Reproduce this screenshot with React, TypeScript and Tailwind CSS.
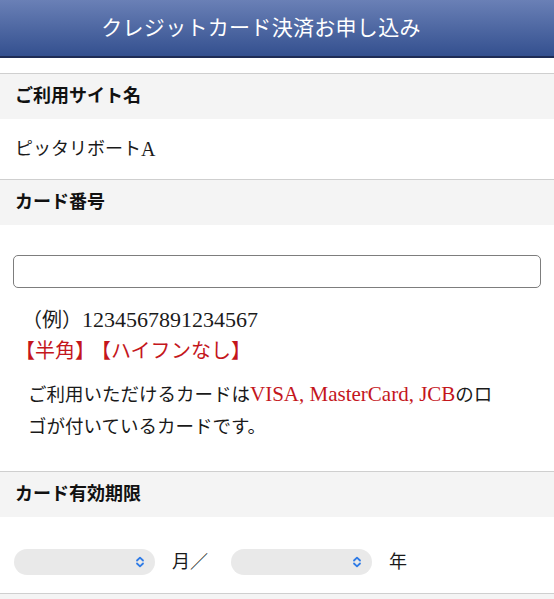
const serif = "font-['Liberation_Serif','Noto_Sans_CJK_JP',serif]"

function Chevrons() {
  return (
    <svg width="10" height="12" viewBox="0 0 10 12" fill="none" stroke="#2f7be6" strokeWidth="1.8" strokeLinecap="round" strokeLinejoin="round">
      <path d="M2 4.5 L5 1.6 L8 4.5" />
      <path d="M2 7.5 L5 10.4 L8 7.5" />
    </svg>
  )
}

function SectionHead({ label }: { label: string }) {
  return (
    <div className="border-t border-[#cfcfcf] bg-[#f4f4f4] h-[46px] flex items-center px-[15px]">
      <h2 className="text-[18px] font-bold text-[#111]">{label}</h2>
    </div>
  )
}

function SelectPill() {
  return (
    <div className="w-[141px] h-[26px] rounded-full bg-[#e9e9e9] flex items-center justify-end pr-[10px]">
      <Chevrons />
    </div>
  )
}

export default function App() {
  return (
    <div className={`${serif} bg-white min-h-[599px] text-[#1a1a1a]`}>
      {/* Title bar */}
      <header className="h-[58px] bg-gradient-to-b from-[#6a80b6] to-[#34508f] border-b-2 border-[#1e2c55] flex items-center justify-center pr-[32px]">
        <h1 className="text-white text-[21px] tracking-[0.3px] pt-[2px]">クレジットカード決済お申し込み</h1>
      </header>

      <div className="h-[15px]" />

      {/* Site name */}
      <SectionHead label="ご利用サイト名" />
      <div className="h-[60px] flex items-center px-[15px] text-[18px]">
        ピッタリボート<span className="text-[20px] leading-none">A</span>
      </div>

      {/* Card number */}
      <SectionHead label="カード番号" />
      <div className="pt-[30px] pb-[28px] px-[13px]">
        <input
          type="text"
          className="block w-full h-[33px] rounded-[5px] border-[1.5px] border-[#7d7d7d] bg-white"
        />
        <div className="mt-[17px] pl-[9px] text-[20px] leading-[31px]">
          （例）<span className="text-[22px] leading-none">1234567891234567</span>
        </div>
        <div className="pl-[2px] text-[20px] leading-[31px] text-[#c4161c]">
          【半角】<span className="ml-[6px]">【ハイフンなし】</span>
        </div>
        <p className="mt-[12px] pl-[15px] pr-[38px] text-[18.5px] leading-[32px]">
          ご利用いただけるカードは<span className="text-[21px] leading-none text-[#c4161c]">VISA, MasterCard, JCB</span>のロゴが付いているカードです。
        </p>
      </div>

      {/* Expiry */}
      <SectionHead label="カード有効期限" />
      <div className="h-[76px] flex items-center gap-[17px] px-[14px] pt-[14px] text-[18px]">
        <SelectPill />
        <span className="w-[42px]">月／</span>
        <SelectPill />
        <span>年</span>
      </div>
      <div className="border-t border-[#cfcfcf] bg-[#f4f4f4] h-[10px]" />
    </div>
  )
}
